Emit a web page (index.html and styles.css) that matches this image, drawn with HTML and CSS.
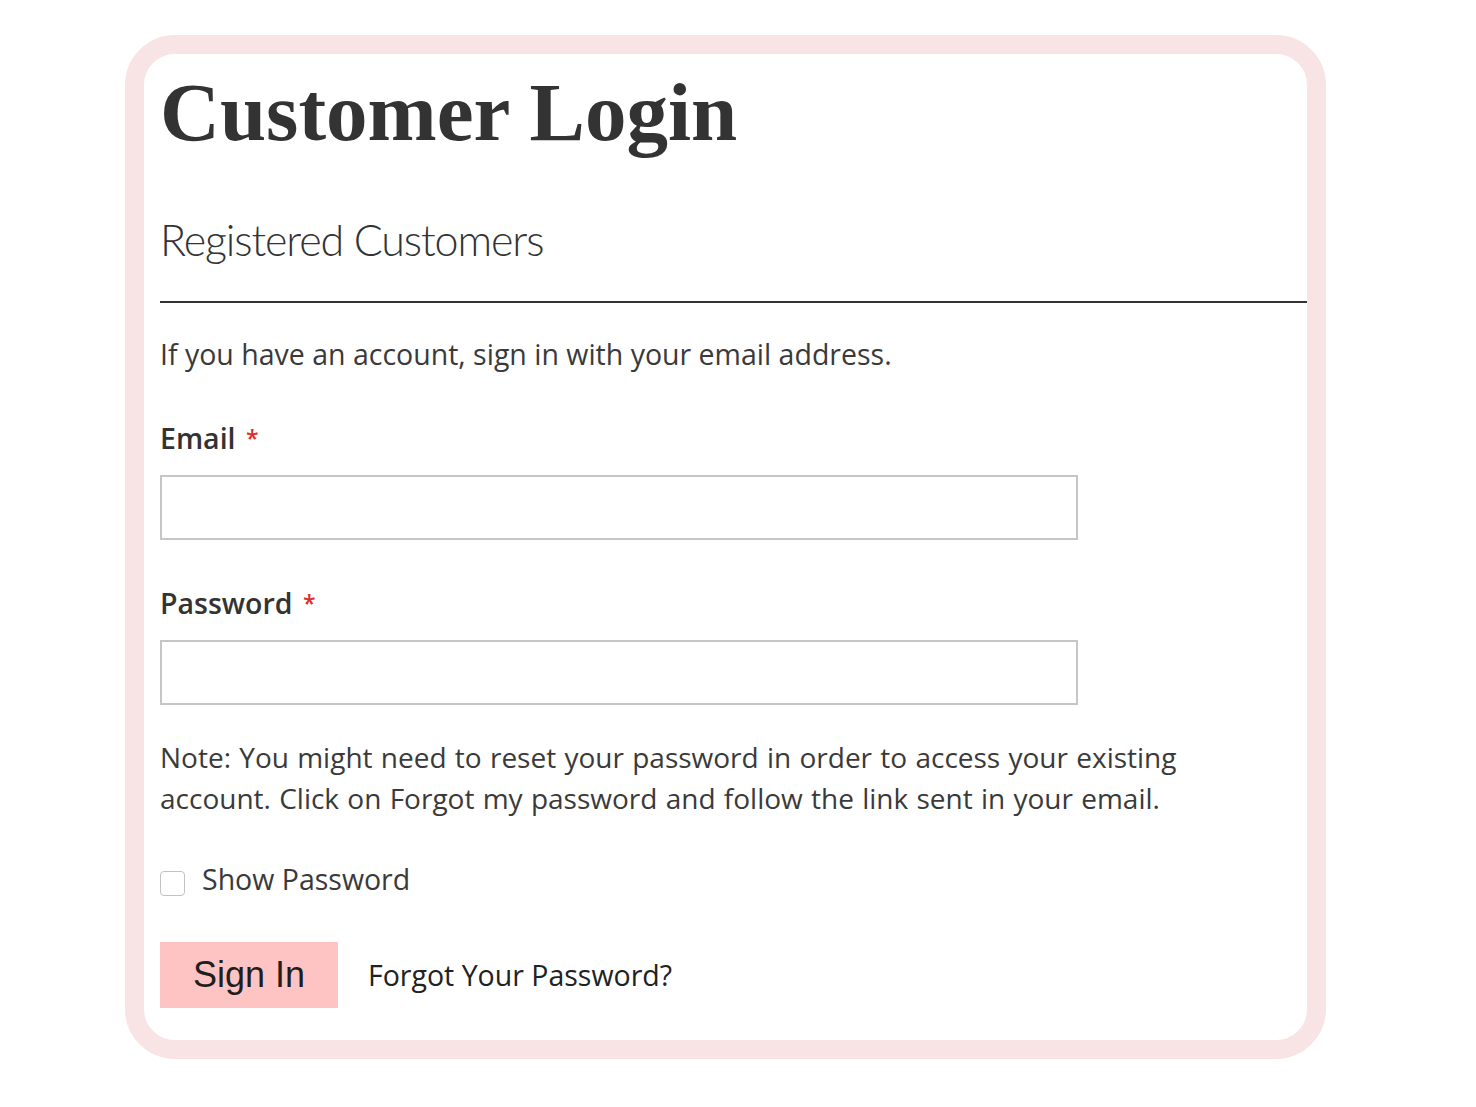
FILE: index.html
```html
<!DOCTYPE html>
<html lang="en">
<head>
    <meta charset="UTF-8">
    <meta name="viewport" content="width=device-width, initial-scale=1.0">
    <title>Customer Login</title>
    <link rel="stylesheet" href="styles.css">
</head>
<body>
<div class="login-box">
    <h1 class="page-title">Customer Login</h1>
    <div class="block-title">Registered Customers</div>
    <p class="intro">If you have an account, sign in with your email address.</p>

    <div class="field">
        <label for="email">Email <span class="required">*</span></label>
        <input type="email" id="email" class="input-text">
    </div>
    <div class="field">
        <label for="pass">Password <span class="required">*</span></label>
        <input type="password" id="pass" class="input-text">
    </div>

    <p class="note">Note: You might need to reset your password in order to access your existing account. Click on Forgot my password and follow the link sent in your email.</p>

    <label class="show-password">
        <input type="checkbox" class="checkbox">
        <span>Show Password</span>
    </label>

    <div class="actions">
        <button type="submit" class="sign-in">Sign In</button>
        <a href="#" class="remind">Forgot Your Password?</a>
    </div>
</div>
</body>
</html>
```

FILE: styles.css
```css
      body {
          font-family: "Open Sans", Arial, sans-serif;
          margin: 0;
          background-color: #ffffff;
          color: #333333;
      }
      .login-box {
          width: 1201px;
          margin: 35px 0 0 125px;
          padding: 17px 0 32px 16px;
          border: 19px solid #f8e4e4;
          border-radius: 50px;
          box-sizing: border-box;
          background-color: #ffffff;
      }
      .page-title {
          margin: 0;
          font-family: "Liberation Serif", "Times New Roman", serif;
          font-weight: bold;
          font-size: 83px;
          line-height: 82px;
          color: #333333;
      }
      .block-title {
          margin-top: 62px;
          padding-bottom: 36px;
          border-bottom: 2px solid #333333;
          font-family: Lato, sans-serif;
          font-weight: 300;
          font-size: 43px;
          line-height: 50px;
          letter-spacing: -1.1px;
          color: #333333;
      }
      .intro, .note {
          margin: 31px 0 0 0;
          font-size: 28.5px;
          line-height: 41px;
          color: #3a3a3a;
      }
      .field {
          margin-top: 43px;
      }
      .field label {
          display: block;
          margin-bottom: 16px;
          font-size: 28.5px;
          font-weight: 600;
          line-height: 41px;
          color: #333333;
      }
      .required {
          color: #e02b27;
          margin-left: 3px;
          font-size: 23px;
          vertical-align: top;
      }
      .input-text {
          display: block;
          width: 918px;
          height: 65px;
          margin: 0;
          border: 2px solid #c6c6c6;
          box-sizing: border-box;
          background: #ffffff;
          font-family: "Open Sans", sans-serif;
          font-size: 24px;
      }
      .note {
          max-width: 1070px;
          margin-top: 32px;
          font-size: 28px;
          word-spacing: 1px;
      }
      .show-password {
          display: flex;
          align-items: center;
          gap: 17px;
          margin-top: 40px;
          font-size: 28.5px;
          line-height: 41px;
          color: #3a3a3a;
      }
      .checkbox {
          appearance: none;
          width: 25px;
          height: 25px;
          margin: 8px 0 0 0;
          border: 1.5px solid #c2c2c2;
          border-radius: 4px;
          background: #ffffff;
      }
      .actions {
          display: flex;
          align-items: center;
          gap: 30px;
          margin-top: 42px;
      }
      .sign-in {
          width: 178px;
          height: 66px;
          border: none;
          background-color: #fec4c4;
          font-family: "Liberation Sans", Arial, sans-serif;
          font-size: 36px;
          color: #1e1e1e;
          cursor: pointer;
      }
      .remind {
          font-size: 28.5px;
          color: #222222;
          text-decoration: none;
      }
```
